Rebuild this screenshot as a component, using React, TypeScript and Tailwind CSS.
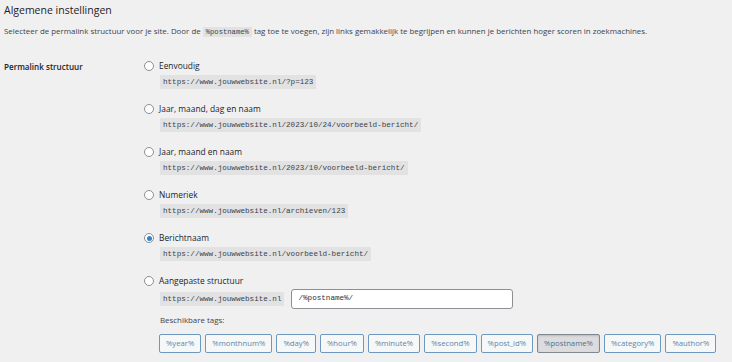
import React from "react";

const options = [
  { label: "Eenvoudig", code: "https://www.jouwwebsite.nl/?p=123" },
  { label: "Jaar, maand, dag en naam", code: "https://www.jouwwebsite.nl/2023/10/24/voorbeeld-bericht/" },
  { label: "Jaar, maand en naam", code: "https://www.jouwwebsite.nl/2023/10/voorbeeld-bericht/" },
  { label: "Numeriek", code: "https://www.jouwwebsite.nl/archieven/123" },
  { label: "Berichtnaam", code: "https://www.jouwwebsite.nl/voorbeeld-bericht/", checked: true },
];

const tags = ["%year%", "%monthnum%", "%day%", "%hour%", "%minute%", "%second%", "%post_id%", "%postname%", "%category%", "%author%"];

function Radio({ checked }: { checked?: boolean }) {
  return (
    <span className="flex h-[10px] w-[10px] shrink-0 items-center justify-center rounded-full border border-[#8c8f94] bg-white">
      {checked && <span className="h-[5px] w-[5px] rounded-full bg-[#3582c4]" />}
    </span>
  );
}

function Code({ children }: { children: React.ReactNode }) {
  return (
    <span className="block h-[14px] bg-[#e2e2e3] px-[3px] font-['Liberation_Mono',monospace] text-[7.6px] leading-[14px] text-[#3c434a]">
      {children}
    </span>
  );
}

export default function App() {
  return (
    <div className="h-[362px] w-[732px] overflow-hidden bg-[#f0f0f1] font-['Open_Sans','Noto_Sans',sans-serif] text-[#3c434a]">
      <div className="px-[4px] pt-[2px]">
        <h2 className="text-[10.5px] leading-[16px] text-[#1d2327]">Algemene instellingen</h2>
        <p className="mt-[6px] text-[7.9px] leading-[14px]">
          Selecteer de permalink structuur voor je site. Door de{" "}
          <span className="bg-[#e2e2e3] px-[3px] py-[1px] font-['Liberation_Mono',monospace] text-[7.2px]">%postname%</span>{" "}
          tag toe te voegen, zijn links gemakkelijk te begrijpen en kunnen je berichten hoger scoren in zoekmachines.
        </p>
        <div className="mt-[20px] flex">
          <div className="w-[140px] shrink-0 pt-[1px] text-[8.1px] font-semibold leading-[14px] text-[#1d2327]">Permalink structuur</div>
          <div className="flex flex-col">
            {options.map((o) => (
              <div key={o.label} className="mb-[13px] flex flex-col">
                <div className="flex h-[14px] items-center gap-[5px] text-[8.4px] text-[#1d2327]">
                  <Radio checked={o.checked} />
                  <span>{o.label}</span>
                </div>
                <div className="mt-[2px] flex pl-[16px]">
                  <Code>{o.code}</Code>
                </div>
              </div>
            ))}
            <div className="flex flex-col">
              <div className="flex h-[14px] items-center gap-[5px] text-[8.4px] text-[#1d2327]">
                <Radio />
                <span>Aangepaste structuur</span>
              </div>
              <div className="mt-[1px] flex items-center gap-[7px] pl-[16px]">
                <Code>https://www.jouwwebsite.nl</Code>
                <div className="flex h-[20px] w-[222px] items-center rounded-[3px] border border-[#8c8f94] bg-white px-[6px] font-['Liberation_Mono',monospace] text-[7.6px] text-[#2c3338]">
                  /%postname%/
                </div>
              </div>
              <div className="mt-[5px] pl-[16px] text-[7.9px] leading-[12px]">Beschikbare tags:</div>
              <div className="mt-[8px] flex gap-[4px] pl-[15px]">
                {tags.map((t) => (
                  <span
                    key={t}
                    className={
                      t === "%postname%"
                        ? "flex h-[19px] items-center rounded-[2px] border border-[#7e8993] bg-[#dcdcde] px-[6px] text-[7.7px] text-[#50718f] shadow-[inset_0_1px_2px_rgba(0,0,0,0.15)]"
                        : "flex h-[19px] items-center rounded-[2px] border border-[#6f98bf] bg-[#f6f7f7] px-[6px] text-[7.7px] text-[#5f86ad]"
                    }
                  >
                    {t}
                  </span>
                ))}
              </div>
            </div>
          </div>
        </div>
      </div>
    </div>
  );
}
